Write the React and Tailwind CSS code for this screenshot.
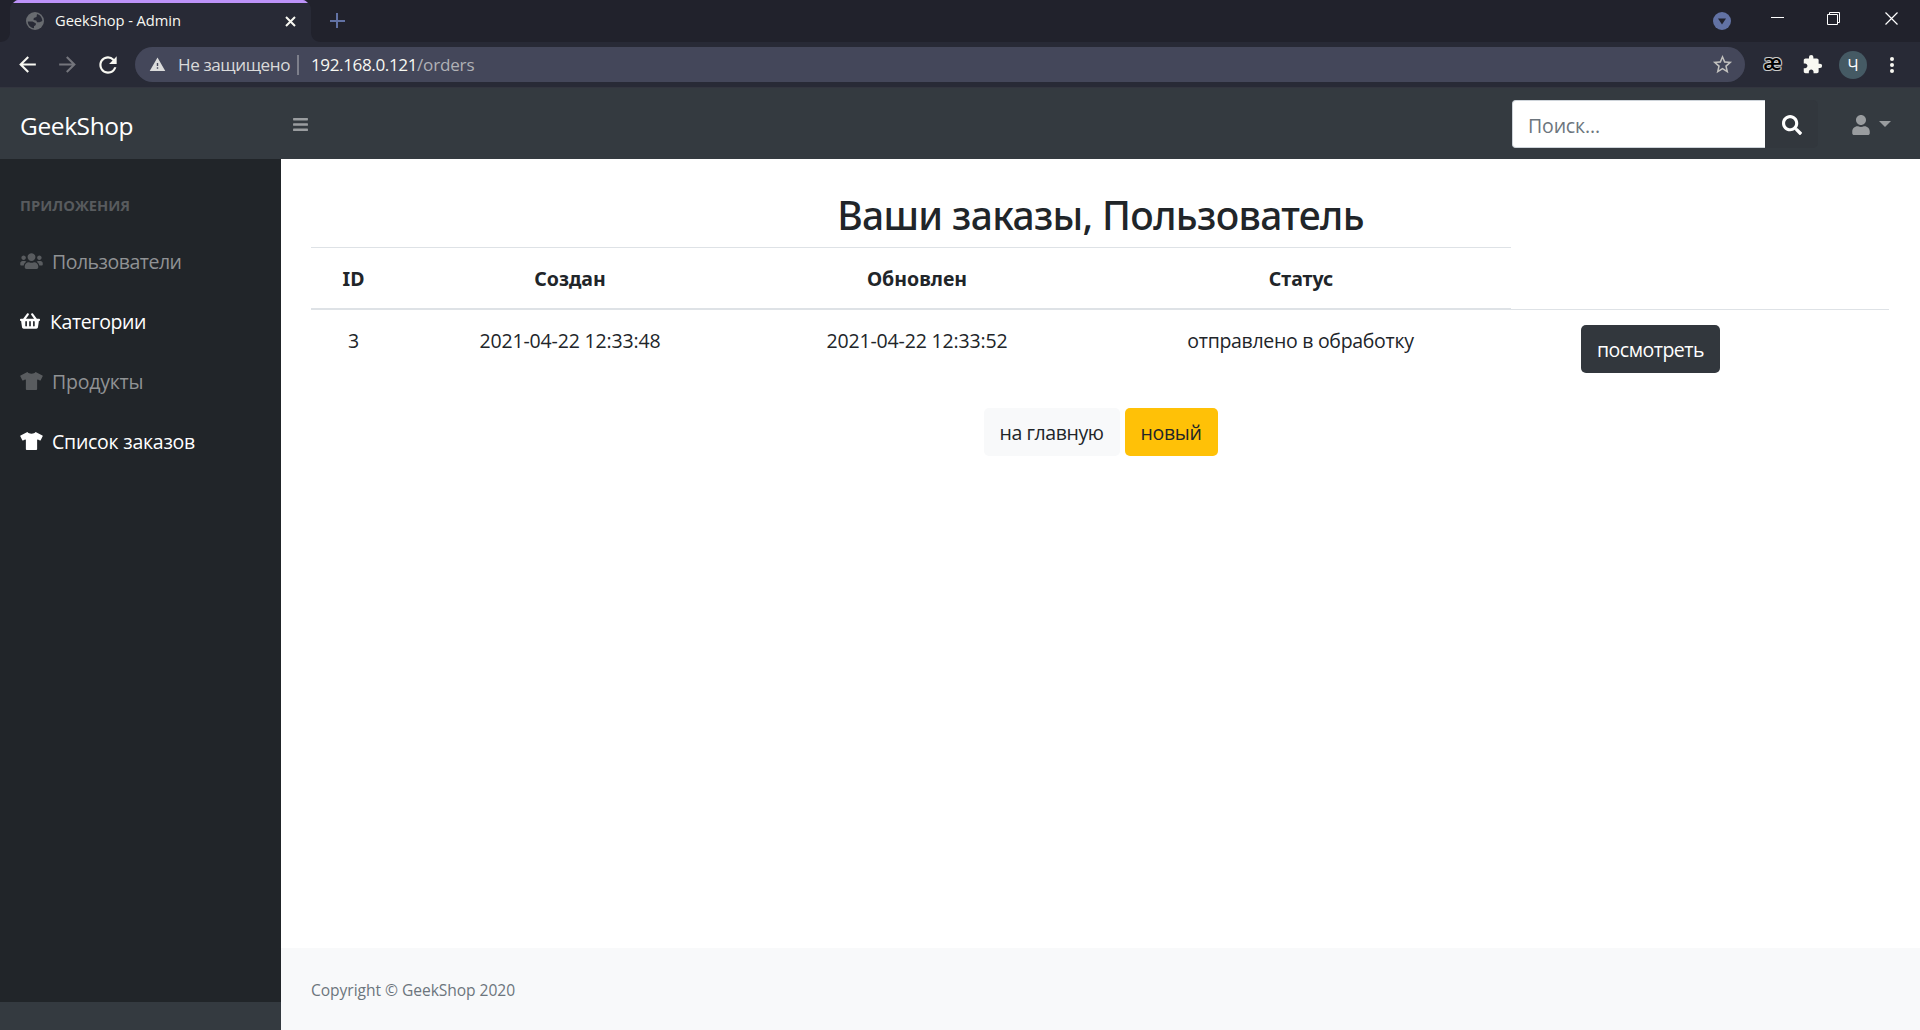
import React from 'react';
import { FaBars, FaSearch, FaShoppingBasket, FaTshirt, FaUser, FaUsers } from 'react-icons/fa';
import { MdArrowBack, MdArrowForward, MdExtension, MdRefresh, MdStarBorder, MdWarning } from 'react-icons/md';

function TabStrip() {
  return (
    <div className="flex h-[42px] bg-[#21222c]">
      <svg width="325" height="42" viewBox="0 0 325 42" className="-mr-[325px] shrink-0">
        <path d="M0 42C6 42 10 38 10 32V10C10 4 14 0 20 0H301C307 0 311 4 311 10V32C311 38 315 42 321 42Z" fill="#282a36" />
        <path d="M13 3C14.500 1.500 16 0 18 0H303C305 0 306.500 1.500 308 3Z" fill="#bd93f9" />
      </svg>
      <div className="relative flex h-full w-[325px] items-center">
        <svg width="18" height="18" viewBox="0 0 18 18" className="ml-[26px]">
          <circle cx="9" cy="9" r="9" fill="#686b70" />
          <path
            d="M11 2C14.500 2.800 16.300 6 16.300 9L13.500 10.200H11L10.300 8.500L7.500 8L7.800 6L10.500 5ZM1.800 9.500L6.500 9.500L9.800 11.200V13L8 14.200V16.300C4.500 15.800 1.800 13 1.800 9.500Z"
            fill="#282a36"
          />
        </svg>
        <span className="ml-[11px] pb-px text-[14.7px] tracking-[-0.05px] text-[#f8f8f2]">GeekShop - Admin</span>
        <svg width="11" height="11" viewBox="0 0 11 11" className="ml-[104px]">
          <path d="M1 1L10 10M10 1L1 10" stroke="#f8f8f2" strokeWidth="2" />
        </svg>
      </div>
      <svg width="16" height="16" viewBox="0 0 16 16" className="mt-[13px] ml-[5px]">
        <path d="M7 0V15M0 8H15" stroke="#6272a4" strokeWidth="2" />
      </svg>
      <div className="ml-auto flex pr-[21px]">
        <svg width="18" height="18" viewBox="0 0 18 18" className="mt-[12px]">
          <circle cx="9" cy="9" r="9" fill="#6272a4" />
          <path d="M5 6.500H13L9 12.500Z" fill="#21222c" />
        </svg>
        <svg width="14" height="14" viewBox="0 0 14 14" className="mt-[12px] ml-[40px]">
          <path d="M0 5.500H13" stroke="#fff" />
        </svg>
        <svg width="14" height="14" viewBox="0 0 14 14" className="mt-[12px] ml-[42px]" fill="none" stroke="#fff">
          <path d="M.5 2.500H10.500V12.500H.5Z" />
          <path d="M2.500 2.500V.5H12.500V10.500H10.500" />
        </svg>
        <svg width="14" height="14" viewBox="0 0 14 14" className="mt-[12px] ml-[44px]">
          <path d="M.5 .5L12.500 12.500M12.500 .5L.5 12.500" stroke="#fff" strokeWidth="1.200" />
        </svg>
      </div>
    </div>
  );
}

function AddressBar() {
  return (
    <div className="flex h-[46px] items-center border-b border-[#33353f] bg-[#282a36] text-[17.1px]">
      <MdArrowBack className="ml-[15px] size-[25px] text-[#f8f8f2]" />
      <MdArrowForward className="ml-[15px] size-[25px] text-[#74757c]" />
      <MdRefresh className="ml-[15px] size-[26px] text-[#f8f8f2]" />
      <div className="ml-[14px] flex h-[35px] w-[1610px] items-center rounded-full bg-[#44475a]">
        <MdWarning className="ml-[14px] size-[17px] text-[#dcdcdc]" />
        <span className="ml-[12px] w-[119px] tracking-[-0.42px] text-[#dadada]">Не защищено</span>
        <span className="h-[20px] w-[2px] bg-[#7d7f8b]" />
        <span className="ml-[12px] tracking-[-0.4px] text-[#f8f8f2]">192.168.0.121</span>
        <span className="tracking-[-0.2px] text-[#b0b1b6]">/orders</span>
        <MdStarBorder className="mr-[11px] ml-auto size-[23px] text-[#c2c1be]" />
      </div>
      <span className="ml-[17px] w-[21px] pb-[5px] text-center text-[21px] leading-none font-semibold text-black [text-shadow:1px_0_0_#ccc,-1px_0_0_#ccc,0_1px_0_#ccc,0_-1px_0_#ccc,1px_1px_0_#999,-1px_-1px_0_#999,1px_-1px_0_#999,-1px_1px_0_#999]">
        æ
      </span>
      <MdExtension className="ml-[19px] size-[21px] text-[#f8f8f2]" />
      <span className="ml-[16px] flex size-[28px] items-center justify-center rounded-full bg-[#455a64] text-[16px] text-white">Ч</span>
      <svg width="4" height="16" viewBox="0 0 4 16" className="ml-[23px]" fill="#f8f8f2">
        <circle cx="2" cy="2" r="2" />
        <circle cx="2" cy="8" r="2" />
        <circle cx="2" cy="14" r="2" />
      </svg>
    </div>
  );
}

function Navbar() {
  return (
    <header className="flex h-[71px] items-center bg-[#343a40]">
      <span className="w-[293px] pt-[5px] pl-[20px] text-[24.5px] tracking-[-0.4px] text-white">GeekShop</span>
      <FaBars className="mt-[2px] -ml-px size-[17px] text-[#9a9da0]" />
      <div className="ml-auto flex h-[48px] w-[306px]">
        <div className="flex w-[253px] items-center rounded-l-[4px] border border-r-0 border-[#ced4da] bg-white pt-[5px] pl-[15px] text-[19.5px] tracking-[-0.15px] text-[#6c757d]">
          Поиск...
        </div>
        <div className="flex w-[53px] items-center justify-center rounded-r-[5px] bg-[#32373d] pt-[2px]">
          <FaSearch className="size-[20px] text-white" />
        </div>
      </div>
      <FaUser className="mt-[3px] ml-[33px] h-[20px] w-[20px] text-[#999c9f]" />
      <svg width="12" height="6" viewBox="0 0 12 6" className="mr-[29px] ml-[8px]">
        <path d="M0 0H12L6 6Z" fill="#999c9f" />
      </svg>
    </header>
  );
}

function Sidebar() {
  return (
    <aside className="flex w-[281px] flex-col bg-[#212529] text-[19.5px]">
      <div className="flex h-[72px] items-center pt-[21px] pl-[20px] text-[14.7px] font-bold text-[#585b5e]">ПРИЛОЖЕНИЯ</div>
      <nav className="flex flex-1 flex-col">
        <a className="flex h-[60px] items-center pl-[20px] text-[#909294]">
          <FaUsers className="h-[18px] w-[23px] text-[#595c5f]" />
          <span className="ml-[9px] pt-[2px] tracking-[-0.5px]">Пользователи</span>
        </a>
        <a className="flex h-[60px] items-center pl-[20px] text-white">
          <FaShoppingBasket className="h-[18px] w-[20px]" />
          <span className="ml-[10px] pt-[2px] tracking-[-0.42px]">Категории</span>
        </a>
        <a className="flex h-[60px] items-center pl-[20px] text-[#909294]">
          <FaTshirt className="h-[18px] w-[23px] text-[#595c5f]" />
          <span className="ml-[9px] pt-[2px] tracking-[-0.22px]">Продукты</span>
        </a>
        <a className="flex h-[60px] items-center pl-[20px] text-white">
          <FaTshirt className="h-[18px] w-[23px]" />
          <span className="ml-[9px] pt-[2px] tracking-[-0.25px]">Список заказов</span>
        </a>
      </nav>
      <div className="h-[28px] bg-[#343a40]" />
    </aside>
  );
}

function Orders() {
  return (
    <main className="flex-1 px-[30px] pt-[31px] text-[19.500px] text-[#212529]">
      <h1 className="pt-px text-center font-['Noto_Sans',sans-serif] text-[39px] leading-[48px] font-medium tracking-[-0.66px]">
        Ваши заказы, Пользователь
      </h1>
      <div className="mt-[8px] grid h-[63px] grid-cols-[85px_348px_346px_421px_378px] text-center font-['Noto_Sans',sans-serif] leading-[62px] font-bold">
        <div className="h-[63px] border-t border-b-2 border-[#dee2e6]">ID</div>
        <div className="h-[63px] border-t border-b-2 border-[#dee2e6]">Создан</div>
        <div className="h-[63px] border-t border-b-2 border-[#dee2e6]">Обновлен</div>
        <div className="h-[63px] border-t border-b-2 border-[#dee2e6] pl-px">Статус</div>
        <div className="border-b border-[#dee2e6]" />
      </div>
      <div className="grid h-[63px] grid-cols-[85px_348px_346px_421px_279px] pt-[15px] text-center leading-[32px]">
        <div>3</div>
        <div className="tracking-[-0.15px]">2021-04-22 12:33:48</div>
        <div className="tracking-[-0.15px]">2021-04-22 12:33:52</div>
        <div className="tracking-[-0.3px]">отправлено в обработку</div>
        <button className="h-[48px] w-[139px] justify-self-center rounded-[5px] bg-[#32373d] pt-[2px] tracking-[-0.5px] text-white">
          посмотреть
        </button>
      </div>
      <div className="mt-[35px] flex justify-center gap-[5px]">
        <button className="h-[48px] w-[136px] rounded-[5px] bg-[#f8f9fa] pt-[2px] tracking-[-0.4px]">на главную</button>
        <button className="h-[48px] w-[93px] rounded-[5px] bg-[#ffc107] pt-[2px] tracking-[-0.3px]">новый</button>
      </div>
    </main>
  );
}

export default function App() {
  return (
    <div className="flex h-[1030px] w-[1920px] flex-col overflow-hidden bg-white font-['Open_Sans','Noto_Sans',sans-serif] whitespace-nowrap">
      <TabStrip />
      <AddressBar />
      <Navbar />
      <div className="flex flex-1">
        <Sidebar />
        <div className="flex flex-1 flex-col">
          <Orders />
          <footer className="flex h-[82px] items-center bg-[#f8f9fa] pt-[4px] pl-[30px] text-[15.6px] tracking-[-0.05px] text-[#6c757d]">
            Copyright © GeekShop 2020
          </footer>
        </div>
      </div>
    </div>
  );
}
